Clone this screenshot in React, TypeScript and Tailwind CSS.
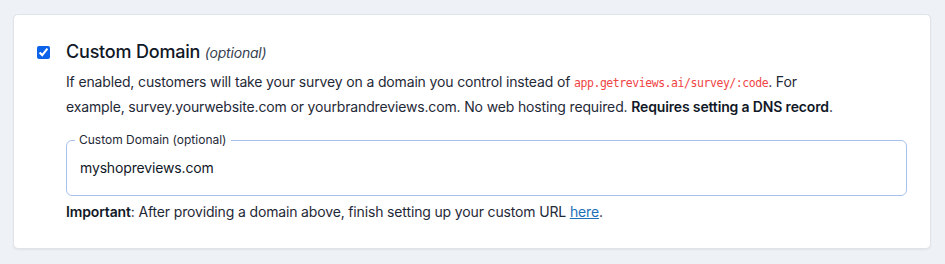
import React from "react";

export default function App() {
  return (
    <div
      className="min-h-[264px] w-[945px] bg-[#eef1f6] pt-[14px] pl-[13px]"
      style={{ fontFamily: "Inter, 'Noto Sans', sans-serif" }}
    >
      <div className="w-[918px] rounded-[5px] border border-[#dfe3ea] bg-white px-[23px] pt-[23px] pb-[24px] shadow-[0_1px_2px_rgba(0,0,0,0.06)]">
        <div className="flex gap-4">
          <div className="flex h-7 items-center">
            <input
              type="checkbox"
              defaultChecked
              className="m-0 h-[13px] w-[13px] accent-[#0b63ea]"
            />
          </div>
          <div className="flex-1">
            <div className="text-[18px] leading-7 font-medium text-[#111827] tracking-[-0.2px]">
              Custom Domain{" "}
              <span className="text-[14px] font-normal italic text-[#374151] tracking-[-0.2px]">(optional)</span>
            </div>
            <p className="mt-[3px] max-w-3xl text-[14px] leading-6 text-[#1f2937] tracking-[-0.15px]">
              If enabled, customers will take your survey on a domain you control instead of{" "}
              <code
                className="text-[11.5px] text-[#ef4444] tracking-[-0.45px]"
                style={{ fontFamily: "'DejaVu Sans Mono', 'Liberation Mono', monospace" }}
              >
                app.getreviews.ai/survey/:code
              </code>
              . For example, survey.yourwebsite.com or yourbrandreviews.com. No web hosting required.{" "}
              <strong className="font-semibold text-[#111827]">Requires setting a DNS record</strong>.
            </p>
            <fieldset className="mt-[13px] rounded-[6px] border-[1.5px] border-[#a9c1ee] pl-[8px] pr-3 pt-[7px] pb-[16px]">
              <legend className="px-1 text-[12px] leading-4 text-[#1f2937]">Custom Domain (optional)</legend>
              <input
                type="text"
                defaultValue="myshopreviews.com"
                className="w-full bg-transparent px-[5px] text-[14px] leading-5 text-[#111827] tracking-[-0.15px] outline-none"
              />
            </fieldset>
            <p className="mt-[4px] text-[14px] leading-6 text-[#1f2937] tracking-[-0.15px]">
              <strong className="font-semibold text-[#111827]">Important</strong>: After providing a domain above, finish setting up your custom URL{" "}
              <a href="#" className="text-[#1d6fb8] underline">
                here
              </a>
              .
            </p>
          </div>
        </div>
      </div>
    </div>
  );
}
